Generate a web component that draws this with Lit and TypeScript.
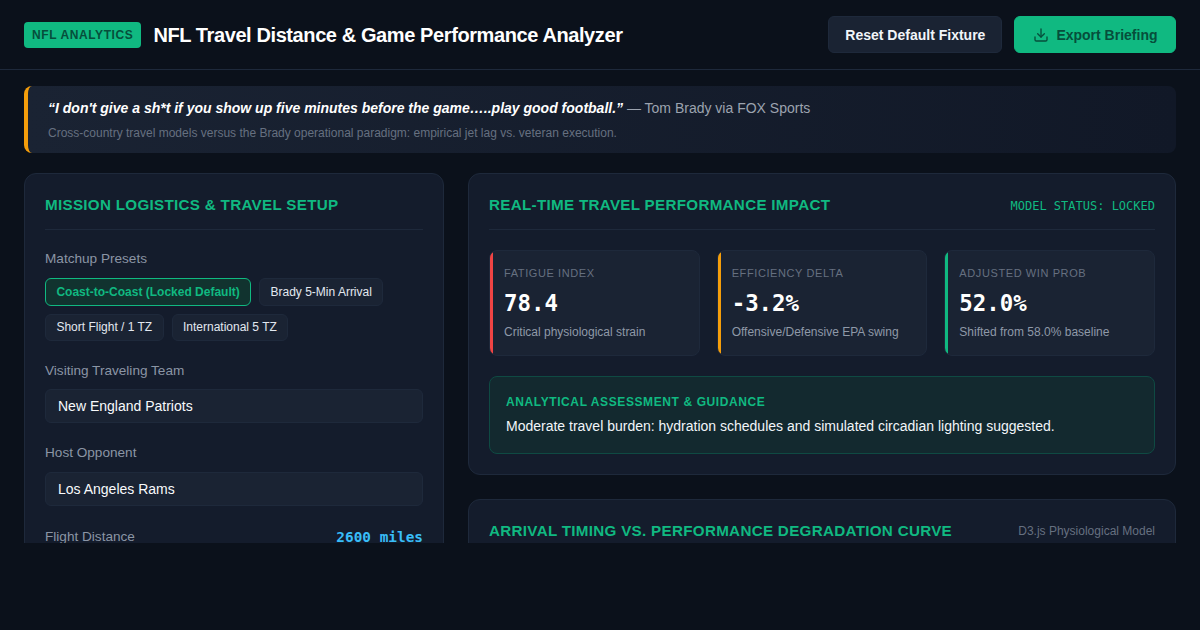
import { LitElement, html, css } from "lit";
import { customElement } from "lit/decorators.js";

@customElement("app-root")
export class AppRoot extends LitElement {
  static styles = css`
    :host { display: block; height: 630px; background: #0b111b; font-family: "Liberation Sans", Arial, sans-serif; color: #f8fafc; overflow: hidden; }
    .clip { height: 543px; overflow: hidden; }
    header { height: 69px; box-sizing: content-box; padding: 0 24px; display: flex; align-items: center; justify-content: space-between; border-bottom: 1px solid #1e293b; }
    .brand { display: flex; align-items: center; gap: 12px; }
    .badge { background: #10b981; color: #064e3b; font-weight: 700; font-size: 12px; letter-spacing: 0.6px; padding: 5px 8px; border-radius: 4px; line-height: 16px; }
    h1 { margin: 0; font-size: 20px; font-weight: 700; letter-spacing: -0.4px; color: #fff; line-height: 28px; }
    .actions { display: flex; gap: 12px; }
    .btn { display: flex; align-items: center; gap: 7px; height: 37px; box-sizing: border-box; padding: 0 16px; border-radius: 6px; font-weight: 700; font-size: 14px; border: 1px solid #1e293b; background: #1a2333; color: #f1f5f9; }
    .btn.primary { background: #10b981; border-color: #10b981; color: #064e3b; padding: 0 17.5px; gap: 7.5px; }
    .btn svg { display: block; }
    .quote { margin: 16px 24px 20px; height: 67px; box-sizing: border-box; border-left: 4px solid #f59e0b; border-radius: 8px; background: linear-gradient(90deg, #1a2333, #111827); padding: 12px 20px; }
    .q1 { font-size: 14px; line-height: 21px; color: #9ca3af; }
    .q1 b { font-style: italic; color: #fff; }
    .q2 { margin-top: 6px; font-size: 12px; line-height: 16px; color: #667080; }
    .grid { display: grid; grid-template-columns: 420px 1fr; gap: 24px; padding: 0 24px; align-items: start; }
    .col { display: flex; flex-direction: column; gap: 24px; }
    .card { background: #141c2c; border: 1px solid #1e293b; border-radius: 12px; padding: 20px; }
    .card-head { display: flex; justify-content: space-between; align-items: center; padding-bottom: 14px; border-bottom: 1px solid #1e293b; margin-bottom: 20px; }
    h2 { margin: 0; font-size: 15.2px; line-height: 21px; font-weight: 700; letter-spacing: 0.3px; color: #10b981; }
    .status { font-family: "DejaVu Sans Mono", monospace; font-size: 12px; color: #10b981; position: relative; top: 1px; }
    .sub { font-size: 12px; color: #667080; }
    .label { font-size: 13.6px; line-height: 18px; color: #8b95a5; }
    .presets { display: flex; flex-wrap: wrap; gap: 8px; margin-top: 10px; margin-bottom: 21px; }
    .chip { font-size: 12px; line-height: 14px; padding: 5.75px 10.4px; border: 1px solid #1e293b; border-radius: 6px; background: #1a2333; color: #e2e8f0; }
    .chip.on { background: #11332f; border-color: #10b981; color: #10b981; font-weight: 700; }
    .field { margin-top: 9.25px; margin-bottom: 21.5px; height: 33.5px; box-sizing: border-box; padding: 0 12px; display: flex; align-items: center; border: 1px solid #1e293b; border-radius: 6px; background: #1a2333; font-size: 14px; color: #f8fafc; }
    .field.last { margin-top: 10px; margin-bottom: 22px; }
    .range { display: flex; justify-content: space-between; align-items: center; }
    .range b { font-family: "DejaVu Sans Mono", monospace; font-size: 14.4px; color: #38bdf8; }
    .metrics { display: grid; grid-template-columns: repeat(3, 1fr); gap: 17px; margin-bottom: 20px; }
    .metric { position: relative; overflow: hidden; background: #1a2333; border: 1px solid #1e293b; border-radius: 8px; padding: 15px 14px; height: 106px; box-sizing: border-box; }
    .metric i { position: absolute; left: 0; top: 0; bottom: 0; width: 3px; }
    .mt { font-size: 11px; letter-spacing: 0.6px; line-height: 14px; color: #667080; }
    .mv { font-family: "DejaVu Sans Mono", monospace; font-weight: 700; font-size: 22.4px; line-height: 30px; color: #fff; margin-top: 8px; }
    .md { font-size: 12px; line-height: 16px; color: #8f99a8; margin-top: 6px; }
    .assess { background: #13292f; border: 1px solid #0f4a43; border-radius: 8px; padding: 17px 16px 0; height: 78px; box-sizing: border-box; }
    .at { font-size: 12px; font-weight: 700; letter-spacing: 0.6px; color: #10b981; line-height: 16px; }
    .ab { font-size: 14px; line-height: 21px; color: #f1f5f9; margin-top: 6px; }
  `;

  render() {
    return html`<div class="clip">
      <header>
        <div class="brand"><span class="badge">NFL ANALYTICS</span><h1>NFL Travel Distance &amp; Game Performance Analyzer</h1></div>
        <div class="actions">
          <div class="btn">Reset Default Fixture</div>
          <div class="btn primary">
            <svg width="16" height="16" viewBox="0 0 24 24" fill="none" stroke="currentColor" stroke-width="2" stroke-linecap="round" stroke-linejoin="round"><path d="M12 15V3"/><path d="M21 15v4a2 2 0 0 1-2 2H5a2 2 0 0 1-2-2v-4"/><path d="m7 10 5 5 5-5"/></svg>
            Export Briefing
          </div>
        </div>
      </header>
      <div class="quote">
        <div class="q1"><b>“I don't give a sh*t if you show up five minutes before the game…..play good football.”</b> — Tom Brady via FOX Sports</div>
        <div class="q2">Cross-country travel models versus the Brady operational paradigm: empirical jet lag vs. veteran execution.</div>
      </div>
      <div class="grid">
        <section class="card">
          <div class="card-head"><h2>MISSION LOGISTICS &amp; TRAVEL SETUP</h2></div>
          <div class="label">Matchup Presets</div>
          <div class="presets">
            <span class="chip on">Coast-to-Coast (Locked Default)</span>
            <span class="chip">Brady 5-Min Arrival</span>
            <span class="chip">Short Flight / 1 TZ</span>
            <span class="chip">International 5 TZ</span>
          </div>
          <div class="label">Visiting Traveling Team</div>
          <div class="field">New England Patriots</div>
          <div class="label">Host Opponent</div>
          <div class="field last">Los Angeles Rams</div>
          <div class="label range"><span>Flight Distance</span><b>2600 miles</b></div>
        </section>
        <div class="col">
          <section class="card">
            <div class="card-head"><h2>REAL-TIME TRAVEL PERFORMANCE IMPACT</h2><span class="status">MODEL STATUS: LOCKED</span></div>
            <div class="metrics">
              <div class="metric"><i style="background:#ef4444"></i><div class="mt">FATIGUE INDEX</div><div class="mv">78.4</div><div class="md">Critical physiological strain</div></div>
              <div class="metric"><i style="background:#f59e0b"></i><div class="mt">EFFICIENCY DELTA</div><div class="mv">-3.2%</div><div class="md">Offensive/Defensive EPA swing</div></div>
              <div class="metric"><i style="background:#10b981"></i><div class="mt">ADJUSTED WIN PROB</div><div class="mv">52.0%</div><div class="md">Shifted from 58.0% baseline</div></div>
            </div>
            <div class="assess"><div class="at">ANALYTICAL ASSESSMENT &amp; GUIDANCE</div><div class="ab">Moderate travel burden: hydration schedules and simulated circadian lighting suggested.</div></div>
          </section>
          <section class="card">
            <div class="card-head"><h2>ARRIVAL TIMING VS. PERFORMANCE DEGRADATION CURVE</h2><span class="sub">D3.js Physiological Model</span></div>
          </section>
        </div>
      </div>
    </div>`;
  }
}
